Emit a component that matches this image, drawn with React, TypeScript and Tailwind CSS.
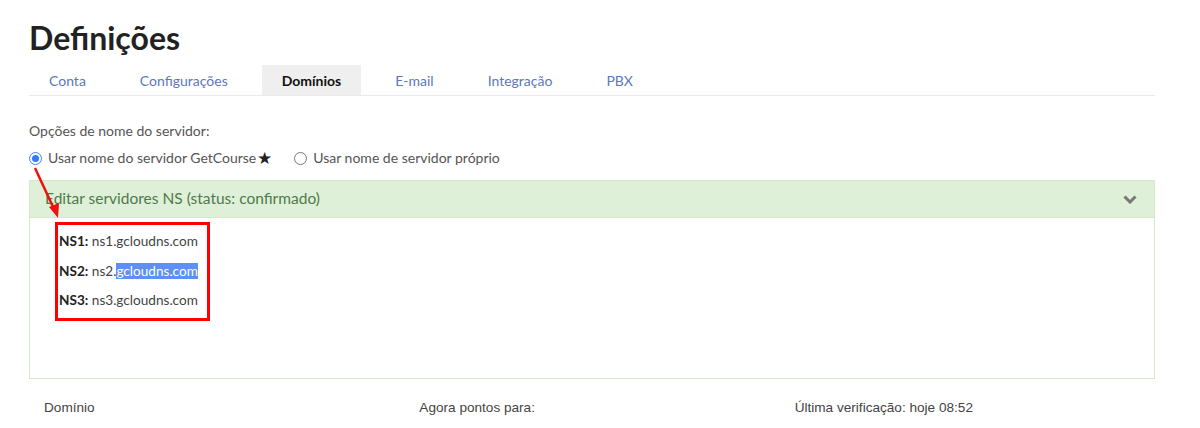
import React from "react";

const tabs = ["Conta", "Configurações", "Domínios", "E-mail", "Integração", "PBX"];

export default function App() {
  return (
    <div className="w-[1200px] h-[428px] bg-white overflow-hidden relative" style={{ fontFamily: "Lato, 'Open Sans', sans-serif" }}>
      <div className="pl-[29px] w-[1155px]">
        <h1 className="pt-[18px] text-[32px] leading-[40px] font-bold text-[#222]">Definições</h1>
        <div className="mt-[7px] flex gap-[14px] border-b border-[#ebebeb]">
          {tabs.map((t) => (
            <div
              key={t}
              className={
                "h-[30px] px-5 flex items-center text-[14px] " +
                (t === "Domínios" ? "bg-[#efefef] font-bold text-[#111]" : "text-[#5b78b8]")
              }
            >
              {t}
            </div>
          ))}
        </div>
        <div className="mt-[26px] text-[14px] text-[#555] leading-[18px]">Opções de nome do servidor:</div>
        <div className="mt-[9px] flex items-center text-[14px] text-[#555] leading-[18px]">
          <span className="w-[13px] h-[13px] rounded-full border border-[#3b82f6] flex items-center justify-center">
            <span className="w-[7px] h-[7px] rounded-full bg-[#2f7cf6]" />
          </span>
          <span className="ml-[6px]">Usar nome do servidor GetCourse</span>
          <span className="ml-[1px] text-[#222] text-[17px] leading-[18px]">★</span>
          <span className="ml-[22px] w-[13px] h-[13px] rounded-full border border-[#777]" />
          <span className="ml-[6px]">Usar nome de servidor próprio</span>
        </div>
        <div className="mt-[13px] border border-[#d6e9c6]">
          <div className="h-[37px] bg-[#dff0d8] border-b border-[#d6e9c6] flex items-center justify-between pl-[15px] pr-[17px]">
            <span className="text-[15.5px] text-[#4f7a4c]">Editar servidores NS (status: confirmado)</span>
            <svg width="14" height="9" viewBox="0 0 14 9">
              <path d="M1.5 1.5 L7 7 L12.5 1.5" stroke="#777" strokeWidth="3" fill="none" />
            </svg>
          </div>
          <div className="h-[160px] bg-white pl-[25px] pt-[4px]">
            <div className="w-[155px] border-[3px] border-[#ff0000] pl-[1px] pt-[2px] pb-[2px] text-[13.6px] text-[#444]">
              <div className="leading-[29.5px] whitespace-nowrap"><b className="text-[#222]">NS1:</b> ns1.gcloudns.com</div>
              <div className="leading-[29.5px] whitespace-nowrap"><b className="text-[#222]">NS2:</b> ns2.<span className="bg-[#5d8ff5] text-white">gcloudns.com</span></div>
              <div className="leading-[29.5px] whitespace-nowrap"><b className="text-[#222]">NS3:</b> ns3.gcloudns.com</div>
            </div>
          </div>
        </div>
        <div className="mt-[19px] grid grid-cols-3 text-[13.6px] text-[#444]" style={{ fontFamily: "'Liberation Sans', Arial, sans-serif" }}>
          <div className="px-[15px]">Domínio</div>
          <div className="px-[15px]">Agora pontos para:</div>
          <div className="px-[15px]">Última verificação: hoje 08:52</div>
        </div>
      </div>
      <svg className="absolute left-0 top-0 pointer-events-none" width="1200" height="428">
        <line x1="35" y1="168" x2="54" y2="209" stroke="#ee1111" strokeWidth="2.5" />
        <polygon points="58,218 49,207 59,203" fill="#ee1111" />
      </svg>
    </div>
  );
}
